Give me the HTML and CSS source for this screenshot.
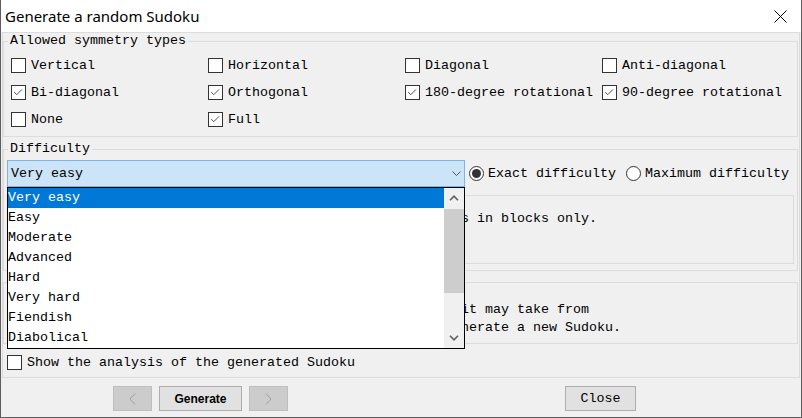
FILE: index.html
```html
<!DOCTYPE html>
<html>
<head>
<meta charset="utf-8">
<link rel="stylesheet" href="styles.css">
</head>
<body>
<div class="window">
  <div class="titlebar">
    <span class="title">Generate a random Sudoku</span>
    <svg class="close-x" width="13" height="13" viewBox="0 0 13 13"><path d="M0.5 0.5 L12.5 12.5 M12.5 0.5 L0.5 12.5" stroke="#000" stroke-width="1" fill="none"/></svg>
  </div>
  <div class="panel">
    <fieldset class="group sym">
      <legend>Allowed symmetry types</legend>
      <div class="sym-grid">
        <label class="cb"><span class="box"></span>Vertical</label>
        <label class="cb"><span class="box"></span>Horizontal</label>
        <label class="cb"><span class="box"></span>Diagonal</label>
        <label class="cb"><span class="box"></span>Anti-diagonal</label>
        <label class="cb"><span class="box"><svg viewBox="0 0 15 15" width="13" height="13"><path d="M2.5 7 L5.5 10 L11.5 4" stroke="#333" stroke-width="1" fill="none"/></svg></span>Bi-diagonal</label>
        <label class="cb"><span class="box"><svg viewBox="0 0 15 15" width="13" height="13"><path d="M2.5 7 L5.5 10 L11.5 4" stroke="#333" stroke-width="1" fill="none"/></svg></span>Orthogonal</label>
        <label class="cb"><span class="box"><svg viewBox="0 0 15 15" width="13" height="13"><path d="M2.5 7 L5.5 10 L11.5 4" stroke="#333" stroke-width="1" fill="none"/></svg></span>180-degree rotational</label>
        <label class="cb"><span class="box"><svg viewBox="0 0 15 15" width="13" height="13"><path d="M2.5 7 L5.5 10 L11.5 4" stroke="#333" stroke-width="1" fill="none"/></svg></span>90-degree rotational</label>
        <label class="cb"><span class="box"></span>None</label>
        <label class="cb"><span class="box"><svg viewBox="0 0 15 15" width="13" height="13"><path d="M2.5 7 L5.5 10 L11.5 4" stroke="#333" stroke-width="1" fill="none"/></svg></span>Full</label>
      </div>
    </fieldset>
    <fieldset class="group diff">
      <legend>Difficulty</legend>
      <div class="diff-row">
        <div class="combo">
          <span>Very easy</span>
          <svg width="9" height="5" viewBox="0 0 9 5"><path d="M0.5 0.5 L4.5 4.5 L8.5 0.5" stroke="#555" stroke-width="1" fill="none"/></svg>
        </div>
        <label class="radio"><span class="circle"><span class="dot"></span></span>Exact difficulty</label>
        <label class="radio second"><span class="circle"></span>Maximum difficulty</label>
      </div>
      <div class="desc">s in blocks only.</div>
    </fieldset>
    <fieldset class="group note">
      <div class="note-text">it may take from
nerate a new Sudoku.</div>
    </fieldset>
    <label class="cb analysis"><span class="box"></span>Show the analysis of the generated Sudoku</label>
  </div>
  <div class="buttons">
    <div class="btn nav"><svg width="7" height="12" viewBox="0 0 7 12"><path d="M6 0.5 L1 6 L6 11.5" stroke="#a0a0a0" stroke-width="1" fill="none"/></svg></div>
    <div class="btn gen">Generate</div>
    <div class="btn nav"><svg width="7" height="12" viewBox="0 0 7 12"><path d="M1 0.5 L6 6 L1 11.5" stroke="#a0a0a0" stroke-width="1" fill="none"/></svg></div>
    <div class="btn close">Close</div>
  </div>
  <div class="dropdown">
    <div class="items">
      <div class="item selected">Very easy</div>
      <div class="item">Easy</div>
      <div class="item">Moderate</div>
      <div class="item">Advanced</div>
      <div class="item">Hard</div>
      <div class="item">Very hard</div>
      <div class="item">Fiendish</div>
      <div class="item">Diabolical</div>
    </div>
    <div class="scrollbar">
      <div class="sb-btn"><svg width="10" height="6" viewBox="0 0 10 6"><path d="M1 5.2 L5 1.2 L9 5.2" stroke="#606060" stroke-width="1.6" fill="none"/></svg></div>
      <div class="thumb"></div>
      <div class="track"></div>
      <div class="sb-btn"><svg width="10" height="6" viewBox="0 0 10 6"><path d="M1 0.8 L5 4.8 L9 0.8" stroke="#606060" stroke-width="1.6" fill="none"/></svg></div>
    </div>
  </div>
</div>
</body>
</html>
```

FILE: styles.css
```css
html, body {
  margin: 0;
  padding: 0;
  background: #ffffff;
}

body {
  font-family: "Liberation Mono", "DejaVu Sans Mono", monospace;
  font-size: 13.333px;
  color: #000;
}

.window {
  position: relative;
  width: 802px;
  height: 418px;
  box-sizing: border-box;
  border: 1px solid #5d5d5d;
  border-top: 0;
  background: #f0f0f0;
  display: flex;
  flex-direction: column;
}

.titlebar {
  flex: none;
  height: 32px;
  background: #ffffff;
  display: flex;
  align-items: center;
  justify-content: space-between;
  padding: 0 14px 0 4px;
}

.title {
  font-family: "Noto Sans", "Open Sans", sans-serif;
  font-size: 15px;
  color: #000;
}

.close-x {
  display: block;
  margin-top: 1px;
}

.panel {
  flex: none;
  margin: 0 1px;
  border: 1px solid #dcdcdc;
  padding: 0 1px 0 0;
}

.group {
  margin: 4px 0 0 0;
  border: 1px solid #dcdcdc;
  padding: 0 3px;
  min-width: 0;
}

.group legend {
  margin-left: 1px;
  padding: 0 2px;
  line-height: 14px;
}

.sym {
  margin-top: 1px;
  padding-top: 4px;
  padding-bottom: 3px;
}

.sym-grid {
  display: grid;
  grid-template-columns: repeat(4, 197px);
  grid-auto-rows: 27px;
  padding-left: 4px;
}

.cb {
  display: flex;
  align-items: center;
  gap: 5px;
  white-space: nowrap;
}

.box {
  width: 15px;
  height: 15px;
  box-sizing: border-box;
  border: 1px solid #333333;
  background: #ffffff;
  display: flex;
  align-items: center;
  justify-content: center;
  flex: none;
}

.box svg {
  display: block;
}

.diff {
  margin-top: 5px;
  padding-top: 4px;
  padding-bottom: 6px;
}

.diff-row {
  display: flex;
  align-items: center;
  height: 27px;
}

.combo {
  width: 458px;
  height: 27px;
  box-sizing: border-box;
  border: 1px solid #7eb4ea;
  background: #cce4f7;
  display: flex;
  align-items: center;
  justify-content: space-between;
  padding: 0 3px 0 3px;
  flex: none;
}

.combo svg {
  display: block;
}

.radio {
  display: flex;
  align-items: center;
  gap: 4px;
  margin-left: 4px;
  white-space: nowrap;
}

.radio.second {
  margin-left: 10px;
}

.circle {
  width: 15px;
  height: 15px;
  box-sizing: border-box;
  border: 1px solid #333333;
  border-radius: 50%;
  background: #ffffff;
  display: flex;
  align-items: center;
  justify-content: center;
  flex: none;
}

.dot {
  width: 9px;
  height: 9px;
  border-radius: 50%;
  background: #333333;
}

.desc {
  margin-top: 8px;
  height: 69px;
  box-sizing: border-box;
  border: 1px solid #dcdcdc;
  padding: 15px 5px 0 453px;
  line-height: 15px;
  white-space: pre;
  overflow: hidden;
}

.note {
  margin-top: 11px;
  padding-top: 18px;
  padding-bottom: 6px;
}

.note-text {
  padding-left: 454px;
  line-height: 18px;
  white-space: pre;
  overflow: hidden;
}

.analysis {
  margin-top: 3px;
  height: 30px;
  padding-left: 4px;
}

.buttons {
  flex: 1;
  display: flex;
  align-items: flex-start;
  gap: 7px;
  padding: 8px 0 0 112px;
}

.btn {
  height: 25px;
  box-sizing: border-box;
  border: 1px solid #adadad;
  background: #e1e1e1;
  display: flex;
  align-items: center;
  justify-content: center;
  flex: none;
}

.btn svg {
  display: block;
}

.btn.nav {
  width: 39px;
  background: #cccccc;
  border-color: #bfbfbf;
}

.btn.gen {
  width: 83px;
  font-family: "Liberation Sans", Arial, sans-serif;
  font-weight: bold;
  font-size: 12px;
}

.btn.close {
  width: 71px;
  margin-left: auto;
  margin-right: 165px;
}

.dropdown {
  position: absolute;
  left: 6px;
  top: 187px;
  width: 458px;
  height: 162px;
  box-sizing: border-box;
  border: 1px solid #000000;
  background: #ffffff;
  display: flex;
}

.items {
  flex: 1;
}

.item {
  height: 20px;
  line-height: 20px;
  white-space: nowrap;
}

.item.selected {
  background: #0078d7;
  color: #ffffff;
}

.scrollbar {
  width: 20px;
  flex: none;
  background: #f0f0f0;
  display: flex;
  flex-direction: column;
}

.sb-btn {
  height: 20px;
  display: flex;
  align-items: center;
  justify-content: center;
  flex: none;
}

.thumb {
  margin-top: 1px;
  height: 84px;
  background: #cdcdcd;
  flex: none;
}

.track {
  flex: 1;
}
```
